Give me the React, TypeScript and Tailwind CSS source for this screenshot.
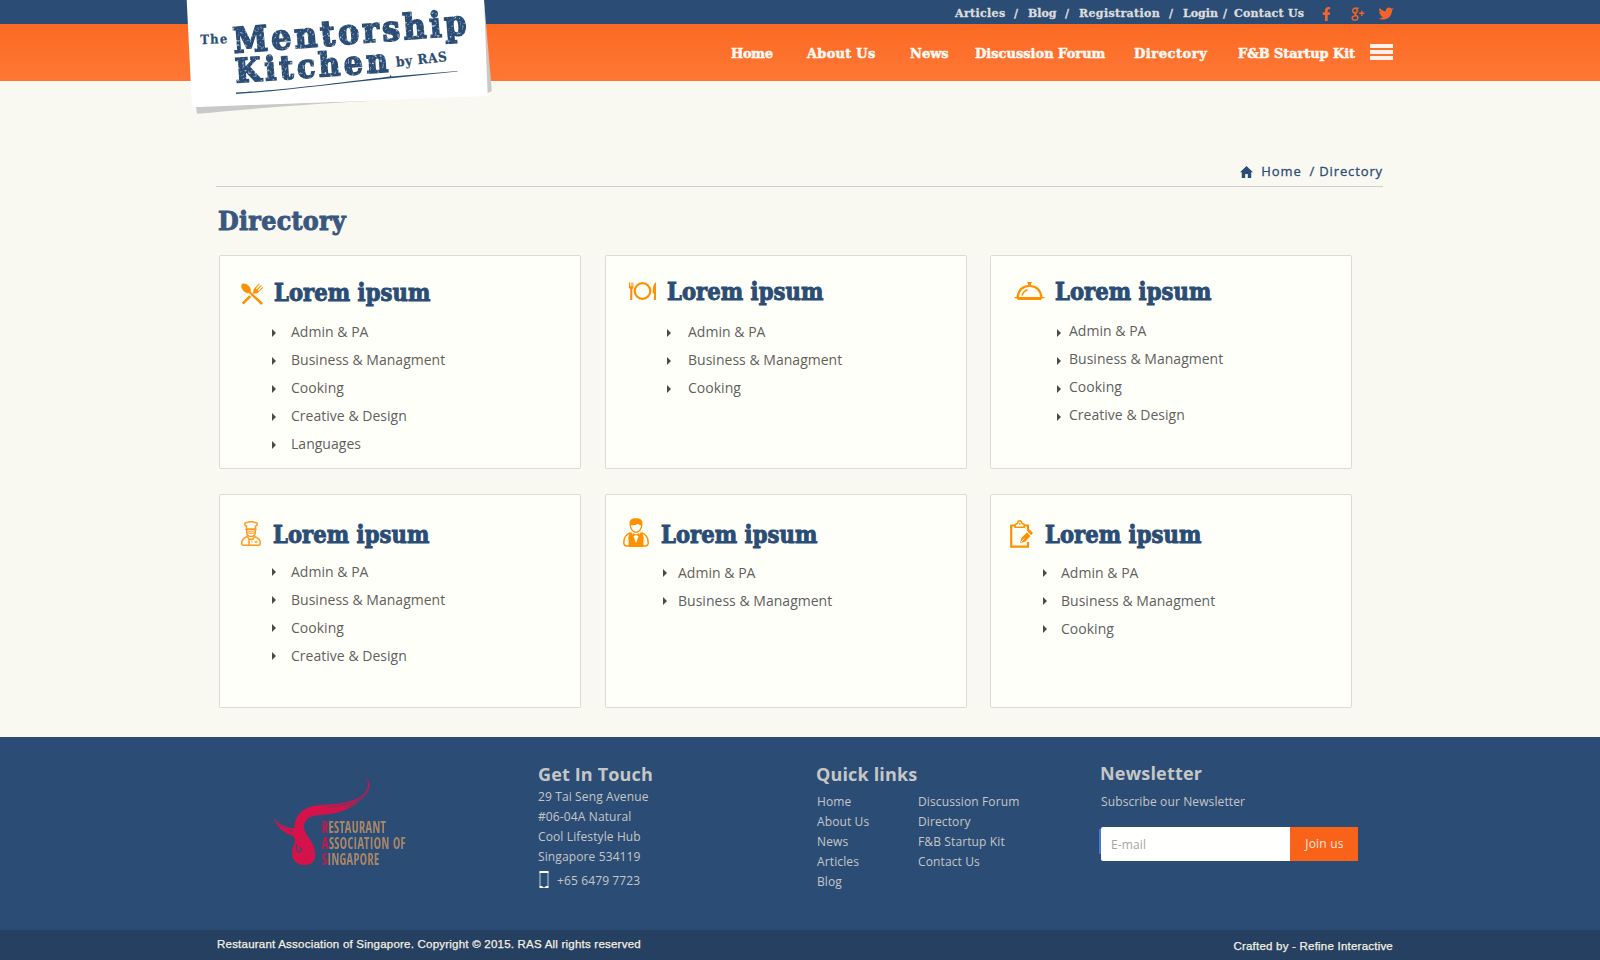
import React from "react";
import { FaFacebookF, FaTwitter } from "react-icons/fa";

const slab = "font-['DejaVu_Serif',serif] font-bold";
const slabNarrow = "font-['DejaVu_Serif_Condensed','DejaVu_Serif',serif] font-bold";

function Logo() {
  return (
    <svg
      className="absolute left-[180px] top-0 z-10"
      width="320"
      height="120"
      viewBox="180 0 320 120"
      aria-label="The Mentorship Kitchen by RAS"
    >
      <defs>
        <filter id="worn" x="-5%" y="-20%" width="110%" height="140%">
          <feTurbulence type="fractalNoise" baseFrequency="0.4" numOctaves="2" seed="4" result="n" />
          <feColorMatrix in="n" type="matrix" values="0 0 0 0 0  0 0 0 0 0  0 0 0 0 0  0 0 0 -2.5 2.4" result="m" />
          <feComposite in="SourceGraphic" in2="m" operator="in" />
        </filter>
      </defs>
      <path d="M484 0L491.8 91 487 93.5 480 30zM196 106L197 113.8 C250 109 320 103 380 100.5z" fill="#c9c9c9" />
      <path d="M186.7 0L192 107.3 487.7 96 484 0z" fill="#fff" />
      <g fill="#2b4d75" stroke="#2b4d75" className={slabNarrow}>
        <g filter="url(#worn)" strokeWidth="1.7">
          <text transform="translate(234 53) rotate(-4.5)" fontSize="35" textLength="234">
            Mentorship
          </text>
          <text transform="translate(236 82.5) rotate(-4)" fontSize="33" textLength="153">
            Kitchen
          </text>
        </g>
        <g strokeWidth="0.2">
          <text transform="translate(200.5 44.2) rotate(-2)" fontSize="13" textLength="27">
            The
          </text>
          <text transform="translate(396.5 66.8) rotate(-6.5)" fontSize="13.5" textLength="51">
            by RAS
          </text>
        </g>
      </g>
      <path d="M236 92.4C270 91.500 330 84 390 76.600L390.500 74.500 391.500 76.400 457.500 71 457.500 71.600 391 78.300C340 83 285 91 236 94z" fill="#2b4d75" />
    </svg>
  );
}

function GooglePlus() {
  return (
    <svg width="14" height="14" viewBox="0 0 14 14" fill="none" stroke="#f4642a" strokeWidth="1.4">
      <ellipse cx="4" cy="3.6" rx="2.3" ry="2.4" />
      <path d="M4.6 1.1h3.2M5.2 5.8C3.4 6.6 3.6 7.4 5 8.2c3.4 2 1.8 4.9-1.1 4.9-3.3 0-4-3.4-.2-4.2l1.6-.2M8.2 6.3h5.2M10.8 3.7v5.2" />
    </svg>
  );
}

function Header() {
  return (
    <header className="relative">
      <div className={`flex h-6 items-center bg-[#2b4d75] pt-[3px] pl-[955px] text-[11px] leading-[21px] tracking-[0.35px] text-[#dcdcdc] [-webkit-text-stroke:0.3px] ${slab}`}>
        <span className="w-[59px]">Articles</span>
        <span className="w-[14px]">/</span>
        <span className="w-[37px] tracking-normal">Blog</span>
        <span className="w-[14px]">/</span>
        <span className="w-[90px]">Registration</span>
        <span className="w-[14px]">/</span>
        <span className="w-[40px] tracking-normal">Login</span>
        <span className="w-[11px]">/</span>
        <span className="w-[87px] tracking-[0.25px]">Contact Us</span>
        <span className="flex w-[30px]">
          <FaFacebookF className="h-[14px] w-[11px] text-[#f4642a]" />
        </span>
        <span className="flex w-[27px]">
          <GooglePlus />
        </span>
        <FaTwitter className="h-[15px] w-[16px] text-[#f4642a]" />
      </div>
      <nav className={`flex h-[57px] items-center bg-linear-to-b from-[#fb6a22] to-[#ff7735] pl-[731px] text-[13px] leading-5 text-[#fdf8f2] [-webkit-text-stroke:0.5px] ${slab}`}>
        <span className="w-[76px] pt-0.5 tracking-[-0.3px]">Home</span>
        <span className="w-[103px] pt-0.5 tracking-[0.25px]">About Us</span>
        <span className="w-[65px] pt-0.5">News</span>
        <span className="w-[159px] pt-0.5 whitespace-nowrap">Discussion Forum</span>
        <span className="w-[104px] pt-0.5 tracking-[0.55px]">Directory</span>
        <span className="w-[132px] pt-0.5 tracking-[-0.1px] whitespace-nowrap">F&amp;B Startup Kit</span>
        <span className="flex flex-col gap-0.5 pb-0.5">
          <i className="block h-1 w-[23px] bg-[#fdf3ec]" />
          <i className="block h-1 w-[23px] bg-[#fdf3ec]" />
          <i className="block h-1 w-[23px] bg-[#fdf3ec]" />
        </span>
      </nav>
      <Logo />
    </header>
  );
}

const CrossedCutlery = () => (
  <svg width="22" height="22" viewBox="0 0 22 22" fill="#ff9100">
    <path d="M1 1C3-.3 7 1 9 4.600c1 1.800 1 3.200.6 4.200L22 20l-1.800 2L8.200 10.200C6.500 10.600 4.500 9.800 2.600 8 .2 5.500-.5 2.400 1 1z" />
    <path d="M8.300 12.200L.8 19.700 2.600 21.500 10.200 14zM12.500 8.800C12 7.400 12.500 6.200 13.500 5.200L18 .4l.8.700-4 4.300.9.900L20 2l.8.800-4.200 4.300.9.900 4-4 .6.800-4.900 4.700c-1.200 1-2.200 1.200-3.200.7l-1 .9-1.500-1.400z" />
  </svg>
);

const PlateSetting = () => (
  <svg width="27" height="18" viewBox="0 0 27 18">
    <circle cx="13.500" cy="9" r="7.800" fill="none" stroke="#ff9100" strokeWidth="2.200" />
    <path d="M0 .5h1v3.700h.8V.5h.8v3.700h.8V.5h1v5.300L3.300 7.200V18H1.200V7.200L0 5.800z" fill="#ff9100" />
    <path d="M27 0v18h-2v-6.500h-1.200C23.500 6 24.500 1.500 27 0z" fill="#ff9100" />
  </svg>
);

const Cloche = () => (
  <svg width="31" height="18" viewBox="0 0 31 18" fill="none" stroke="#ff9100">
    <path d="M3.500 15.500C4.500 8 9 4 15.500 4s11 4 12 11.500" strokeWidth="2.200" />
    <path d="M8 13.500c.8-3 2.500-4.700 5.500-5.800" strokeWidth="1.500" />
    <path d="M0 15h31l-1 1.300-2 .2-1 1.500H4l-1-1.500-2-.2zM13 0h5l-.8 1.500-.4 1.800h-2.600l-.4-1.800z" fill="#ff9100" stroke="none" />
  </svg>
);

const Chef = () => (
  <svg width="20" height="25" viewBox="0 0 20 25" fill="none" stroke="#ff9a1c" strokeWidth="1.500">
    <path d="M5.500 8V5.200C2.800 4.500 3.500 1.200 6 1.600c1-1.200 7-1.200 8 0 2.500-.4 3.200 2.900.5 3.600V8zM4.300 8.400h11.400M5.700 8v3.500c0 5.200 8.600 5.200 8.600 0V8" />
    <path d="M6.500 11.500c1.500-1.400 2.500-1 3.500-.5 1-.5 2-.9 3.500.5-1 1.200-6 1.200-7 0z" strokeWidth="1" />
    <path d="M6.500 15.500C2.500 17 .7 18.500.7 22.200c0 1.500.6 2 1.600 2h15.400c1 0 1.600-.5 1.600-2 0-3.700-1.800-5.200-5.800-6.700M6.500 15.500L8 18.200h4l1.500-2.700M8 18.200v6M10.300 20.500h1M13.500 21h3" />
  </svg>
);

const Waiter = () => (
  <svg width="26" height="29" viewBox="0 0 26 29">
    <path d="M6.700 7C5.700 2 8.500.2 13 .2S20.300 2 19.300 7c0 4-3 8-6.300 8S6.700 11 6.700 7z" fill="#ff9100" />
    <path d="M8 7.300c3 .2 5.300-.3 7-1.600 1 1 1.800 1.400 3 1.600-.2 3.300-2.500 6.300-5 6.300s-4.800-3-5-6.300z" fill="#fffffa" />
    <path d="M7.500 14.600C2.500 16.500.8 20 .8 24.500c0 2.300 1 3.500 3 3.500h18.400c2 0 3-1.200 3-3.500 0-4.500-1.700-8-6.700-9.900" fill="none" stroke="#ff9100" strokeWidth="1.500" />
    <path d="M6.500 15L9 14.500 13 25l4-10.500 2.500.5 2 8-1.500 6H6l-1.500-6z" fill="#ff9100" />
    <path d="M10 15l2.300 1.200h1.400L16 15v3.500l-2.300-1.200h-1.400L10 18.500z" fill="#ff9100" />
    <path d="M5 20.500v6M21 20.500v6" stroke="#fffffa" strokeWidth="1" />
  </svg>
);

const ClipboardEdit = () => (
  <svg width="23" height="28" viewBox="0 0 23 28">
    <path d="M5 5.500H1.200V26.700H18V22M18 11V5.500H14.500" fill="none" stroke="#ff9100" strokeWidth="2.200" />
    <path d="M5.200 7.200V4.500L7.500 3.300C7.800 1.500 8.500.8 9.700.8s1.900.7 2.200 2.500l2.300 1.200v2.700z" fill="#fffffa" stroke="#ff9100" strokeWidth="1.500" />
    <circle cx="9.700" cy="3.900" r="0.900" fill="#ff9100" />
    <path d="M19.500 9.500L23 12.800 21.200 15.200 17.600 11.800zM16.800 12.600L20.500 16 15.500 21.500 9.800 23.200 11.500 17.800z" fill="#ff9100" />
    <path d="M10.500 22.500L14.300 18.400" stroke="#fffffa" strokeWidth="0.900" />
  </svg>
);

type CardData = {
  icon: React.ReactNode;
  head: string;
  iconBox: string;
  list: string;
  arrow: string;
  label: string;
  items: string[];
};

const all = ["Admin & PA", "Business & Managment", "Cooking", "Creative & Design", "Languages"];

const cards: CardData[] = [
  { icon: <CrossedCutlery />, head: "pt-[23px] pl-[21px]", iconBox: "w-[33px] pt-0.5", list: "mt-[11px] pl-[52px]", arrow: "w-[19px] pt-px", label: "Food", items: all },
  { icon: <PlateSetting />, head: "pt-[22px] pl-[23px]", iconBox: "w-[38px] pb-0.5", list: "mt-3 pl-[61px]", arrow: "w-[21px] pt-px", label: "Dining", items: all.slice(0, 3) },
  { icon: <Cloche />, head: "pt-[22px] pl-[23px]", iconBox: "w-[41px] pb-0.5", list: "mt-[11px] pl-[66px]", arrow: "w-3 pt-[3px]", label: "Catering", items: all.slice(0, 4) },
  { icon: <Chef />, head: "pt-[26px] pl-[21px]", iconBox: "w-[32px] pb-1", list: "mt-[9px] pl-[52px]", arrow: "w-[19px]", label: "Chefs", items: all.slice(0, 4) },
  { icon: <Waiter />, head: "pt-[26px] pl-[17px]", iconBox: "w-[38px] pb-1.5", list: "mt-2.5 pl-[57px]", arrow: "w-[15px]", label: "Service", items: all.slice(0, 2) },
  { icon: <ClipboardEdit />, head: "pt-[26px] pl-[19px]", iconBox: "w-[35px] pb-0.5", list: "mt-2.5 pl-[52px]", arrow: "w-[18px]", label: "Planning", items: all.slice(0, 3) },
];

function Card({ icon, head, iconBox, list, arrow, items }: CardData) {
  return (
    <section className="h-[214px] w-[362px] rounded-[2px] border border-[#dcdcd5] bg-[#fffffa]">
      <div className={head}>
        <div className="flex h-7 items-center">
          <span className={`flex shrink-0 ${iconBox}`}>{icon}</span>
          <h2 className={`pb-px text-[23.5px] leading-7 tracking-[0.05px] text-[#2b4d75] [-webkit-text-stroke:0.9px] ${slabNarrow}`}>Lorem ipsum</h2>
        </div>
      </div>
      <ul className={list}>
        {items.map((t) => (
          <li key={t} className="flex h-7 items-center text-sm leading-7 tracking-[0.02px] text-[#5f5f5d]">
            <span className={arrow}>
              <i className="block h-0 w-0 border-y-4 border-l-4 border-y-transparent border-l-[#4a4a4a]" />
            </span>
            {t}
          </li>
        ))}
      </ul>
    </section>
  );
}

const rasLines = ["RESTAURANT", "ASSOCIATION OF", "SINGAPORE"];

function RasLogo() {
  return (
    <div className="flex w-[278px] pt-[28px]">
      <svg width="62" height="110" viewBox="0 0 186 330" className="overflow-visible">
        <path
          d="M318 38C330 58 324 84 294 100C262 116 218 119 186 120C138 121 104 144 103 190C84 190 56 180 41 157C50 186 72 206 98 212C108 222 106 232 101 242C90 262 96 300 134 300C160 300 168 286 165 262C162 224 132 212 132 186C134 154 160 151 190 149C236 147 270 132 298 108C334 80 334 52 318 38Z"
          fill="#d5124a"
        />
        <path d="M320 78C308 98 294 106 278 112C252 121 224 125 200 127M308 96C294 112 276 122 252 128M48 168C60 184 78 194 98 199" fill="none" stroke="#2b4d75" strokeWidth="2" />
        <path d="M111 238C106 250 110 262 118 262C125 261 126 250 120 248" fill="none" stroke="#2b4d75" strokeWidth="3.500" />
      </svg>
      <div className="mt-[54px] h-12 w-[110px] origin-top-left scale-x-[0.775] font-['Open_Sans_Condensed','Open_Sans',sans-serif] text-[16px] leading-4 font-light tracking-[0.4px] whitespace-nowrap text-[#a98667]">
        {rasLines.map((line) => (
          <p key={line} className="first-letter:text-[#d5124a]">
            {line}
          </p>
        ))}
      </div>
    </div>
  );
}

function Footer() {
  return (
    <footer className="bg-[#2b4d75] text-xs leading-5 tracking-[0.12px] text-[#c6c6c6]">
      <div className="flex h-[193px] pl-[260px]">
        <RasLogo />
        <div className="w-[278px] pt-[25px]">
          <h3 className="mb-px text-lg leading-6 font-bold tracking-[0.15px]">Get In Touch</h3>
          <p>29 Tai Seng Avenue</p>
          <p>#06-04A Natural</p>
          <p>Cool Lifestyle Hub</p>
          <p>Singapore 534119</p>
          <p className="flex items-center gap-2 pt-1 pl-px">
            <svg width="10" height="17" viewBox="0 0 10 17" className="-mt-[3px]">
              <rect x="1" y="0.500" width="8" height="16" rx="1" fill="none" stroke="#c5cfdb" />
              <path d="M0.500 0h9v2h-9zM0.500 15h3v2h-3zM6.500 15h3v2h-3z" fill="#fff" />
            </svg>
            +65 6479 7723
          </p>
        </div>
        <div className="w-[284px] pt-[25px]">
          <h3 className="mb-1.5 text-lg leading-6 font-bold tracking-[0.15px]">Quick links</h3>
          <div className="flex pl-px">
            <div className="w-[101px]">
              <p>Home</p>
              <p>About Us</p>
              <p>News</p>
              <p>Articles</p>
              <p>Blog</p>
            </div>
            <div>
              <p>Discussion Forum</p>
              <p>Directory</p>
              <p>F&amp;B Startup Kit</p>
              <p>Contact Us</p>
            </div>
          </div>
        </div>
        <div className="pt-6">
          <h3 className="mb-[7px] text-lg leading-6 font-bold tracking-[0.2px]">Newsletter</h3>
          <p className="pl-px">Subscribe our Newsletter</p>
          <form className="-ml-px mt-[15px] flex items-start">
            <i className="mt-0.5 block h-[25px] w-0.5 bg-[#3f7bd0]" />
            <span className="flex h-[34px] w-[189px] items-center rounded-l-[2px] bg-[#fffffd] pt-0.5 pl-2.5 text-[#a5a5a5]">E-mail</span>
            <span className="flex h-[34px] w-[68px] items-center justify-center bg-[#f96219] pl-px tracking-[0.2px] text-[#f3e6dd]">Join us</span>
          </form>
        </div>
      </div>
      <div className="flex h-[30px] justify-between bg-[#264062] pr-[207px] pl-[217px] font-['Liberation_Sans',Arial,sans-serif] text-[11.5px] leading-7 tracking-[0.22px] text-[#f5f0e0] [-webkit-text-stroke:0.25px]">
        <span>Restaurant Association of Singapore. Copyright © 2015. RAS All rights reserved</span>
        <span className="pt-0.5">Crafted by - Refine Interactive</span>
      </div>
    </footer>
  );
}

export default function App() {
  return (
    <div className="h-[960px] w-[1600px] overflow-hidden bg-[#f9f8f1] font-['Open_Sans',sans-serif]">
      <Header />
      <main className="h-[656px] pt-[79px]">
        <div className="mr-[217px] ml-[216px] flex h-[27px] items-start justify-end border-b border-[#cfcfcf] text-[13px] leading-[23px] tracking-[0.88px] text-[#2b4d75] [-webkit-text-stroke:0.3px]">
          <svg width="13" height="12" viewBox="0 0 13 12" className="mt-1.5 mr-2" fill="#2b4d75">
            <path d="M6.500 0L13 6.300H11.200V12H7.800V8H5.200V12H1.800V6.300H0z" />
          </svg>
          <span className="mr-2">Home</span>
          <span className="mr-1">/</span>
          <span className="-mr-px pr-px">Directory</span>
        </div>
        <h1 className={`mt-4 pb-px pl-[218px] text-[26.5px] leading-9 tracking-[0.3px] text-[#3a5780] [-webkit-text-stroke:0.9px] ${slabNarrow}`}>Directory</h1>
        <div className="mt-[15px] grid grid-cols-[386px_385px_362px] gap-y-[25px] pl-[219px]">
          {cards.map((c) => (
            <Card key={c.label} {...c} />
          ))}
        </div>
      </main>
      <Footer />
    </div>
  );
}
